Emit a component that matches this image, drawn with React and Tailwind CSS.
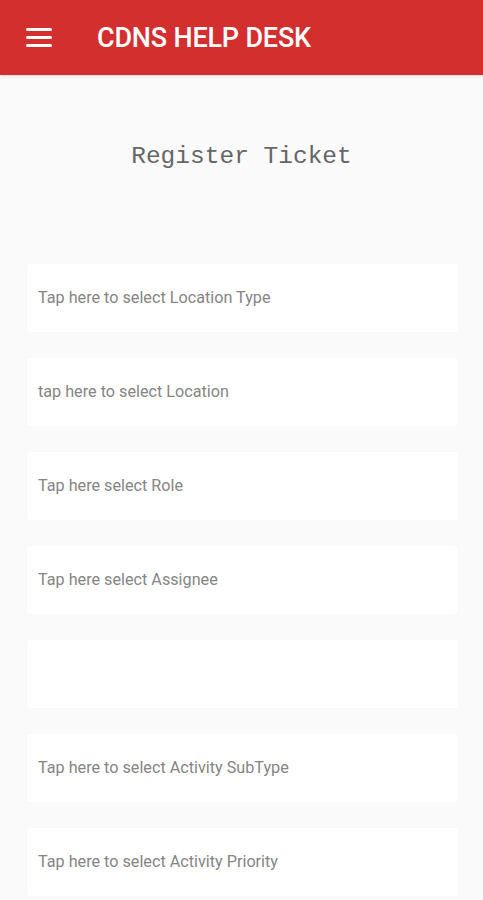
import React from 'react';

const fields = [
  'Tap here to select Location Type',
  'tap here to select Location',
  'Tap here select Role',
  'Tap here select Assignee',
  '',
  'Tap here to select Activity SubType',
  'Tap here to select Activity Priority',
];

export default function App() {
  return (
    <div className="w-[483px] h-[900px] overflow-hidden bg-[#fafafa] font-['Roboto',sans-serif]">
      <div className="h-[75px] bg-[#d32f2f] flex items-center shadow-sm">
        <div className="ml-[26px] w-[26px] flex flex-col gap-[5px]">
          <span className="h-[3px] bg-white rounded-sm" />
          <span className="h-[3px] bg-white rounded-sm" />
          <span className="h-[3px] bg-white rounded-sm" />
        </div>
        <h1 className="ml-[45px] text-white text-[27px] font-medium tracking-[-0.2px] mt-[2px]">CDNS HELP DESK</h1>
      </div>

      <div className="pt-[65px] text-center font-['Liberation_Mono',monospace] text-[24.5px] text-[#666] leading-[34px]">
        Register Ticket
      </div>

      <div className="mt-[90px] pl-[27px] pr-[25px] flex flex-col gap-[26px]">
        {fields.map((f, i) => (
          <div key={i} className="h-[68px] bg-white rounded-[3px] shadow-[0_0_2px_rgba(0,0,0,0.04)] flex items-center px-[11px] text-[16.2px] text-[#858585]">
            {f}
          </div>
        ))}
      </div>
    </div>
  );
}
